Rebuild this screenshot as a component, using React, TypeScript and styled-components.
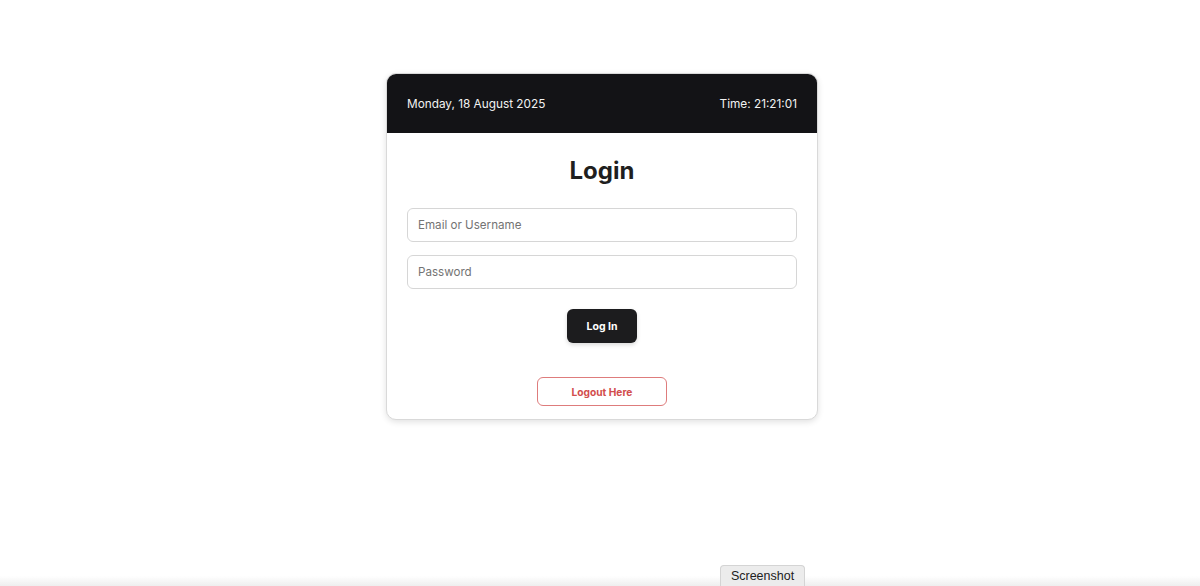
import React, { useState } from "react";
import styled, { createGlobalStyle } from "styled-components";

const GlobalStyle = createGlobalStyle`
  html, body {
    margin: 0;
    padding: 0;
    background: #ffffff;
    font-family: Inter, "Noto Sans", sans-serif;
  }
  * {
    box-sizing: border-box;
  }
`;

const Page = styled.div`
  min-height: 586px;
  display: flex;
  justify-content: center;
  align-items: flex-start;
  padding: 73px 0 0 4px;
`;

const Card = styled.div`
  width: 432px;
  background: #ffffff;
  border: 1px solid #d9d9d9;
  border-radius: 10px;
  box-shadow: 0 2px 6px rgba(0, 0, 0, 0.12);
  overflow: hidden;
`;

const Header = styled.div`
  height: 59px;
  background: #131316;
  color: #f2f2f2;
  display: flex;
  align-items: center;
  justify-content: space-between;
  padding: 0 20px;
  font-size: 11.8px;
`;

const Body = styled.div`
  display: flex;
  flex-direction: column;
  align-items: center;
  padding: 23px 20px 13px;
`;

const Title = styled.h1`
  margin: 0 0 22px;
  font-size: 24px;
  font-weight: 700;
  color: #1f1f1f;
  line-height: 30px;
`;

const Form = styled.form`
  width: 100%;
  display: flex;
  flex-direction: column;
  align-items: center;
  gap: 13px;
`;

const Input = styled.input`
  width: 100%;
  height: 34px;
  border: 1px solid #d6d6d6;
  border-radius: 6px;
  padding: 0 10px;
  font-family: Inter, "Noto Sans", sans-serif;
  font-size: 11.6px;
  color: #222;
  outline: none;
  &::placeholder {
    color: #737373;
  }
`;

const SubmitButton = styled.button`
  margin-top: 7px;
  width: 70px;
  height: 34px;
  border: none;
  border-radius: 6px;
  background: #1c1c1e;
  color: #ffffff;
  font-family: Inter, "Noto Sans", sans-serif;
  font-size: 10.5px;
  font-weight: 700;
  box-shadow: 0 2px 4px rgba(0, 0, 0, 0.15);
  cursor: pointer;
`;

const LogoutButton = styled.button`
  margin-top: 34px;
  width: 130px;
  height: 29px;
  border: 1px solid #de7c7c;
  border-radius: 6px;
  background: #ffffff;
  color: #d24d4d;
  font-family: Inter, "Noto Sans", sans-serif;
  font-size: 10.2px;
  font-weight: 700;
  cursor: pointer;
`;

const BottomBar = styled.div`
  position: fixed;
  left: 0;
  right: 0;
  bottom: 0;
  height: 10px;
  background: linear-gradient(to bottom, rgba(240, 240, 240, 0), #eeeeee);
`;

const ScreenshotTab = styled.div`
  position: fixed;
  bottom: 0;
  left: 720px;
  width: 85px;
  height: 21px;
  background: #ececec;
  border: 1px solid #d4d4d4;
  border-bottom: none;
  border-radius: 4px 4px 0 0;
  display: flex;
  align-items: center;
  justify-content: center;
  font-family: "Liberation Sans", Arial, sans-serif;
  font-size: 12.5px;
  color: #222;
`;

export default function App() {
  const [user, setUser] = useState("");
  const [pass, setPass] = useState("");

  return (
    <>
      <GlobalStyle />
      <Page>
        <Card>
          <Header>
            <span>Monday, 18 August 2025</span>
            <span>Time: 21:21:01</span>
          </Header>
          <Body>
            <Title>Login</Title>
            <Form onSubmit={(e) => e.preventDefault()}>
              <Input
                placeholder="Email or Username"
                value={user}
                onChange={(e) => setUser(e.target.value)}
              />
              <Input
                type="password"
                placeholder="Password"
                value={pass}
                onChange={(e) => setPass(e.target.value)}
              />
              <SubmitButton type="submit">Log In</SubmitButton>
            </Form>
            <LogoutButton type="button">Logout Here</LogoutButton>
          </Body>
        </Card>
      </Page>
      <BottomBar />
      <ScreenshotTab>Screenshot</ScreenshotTab>
    </>
  );
}
